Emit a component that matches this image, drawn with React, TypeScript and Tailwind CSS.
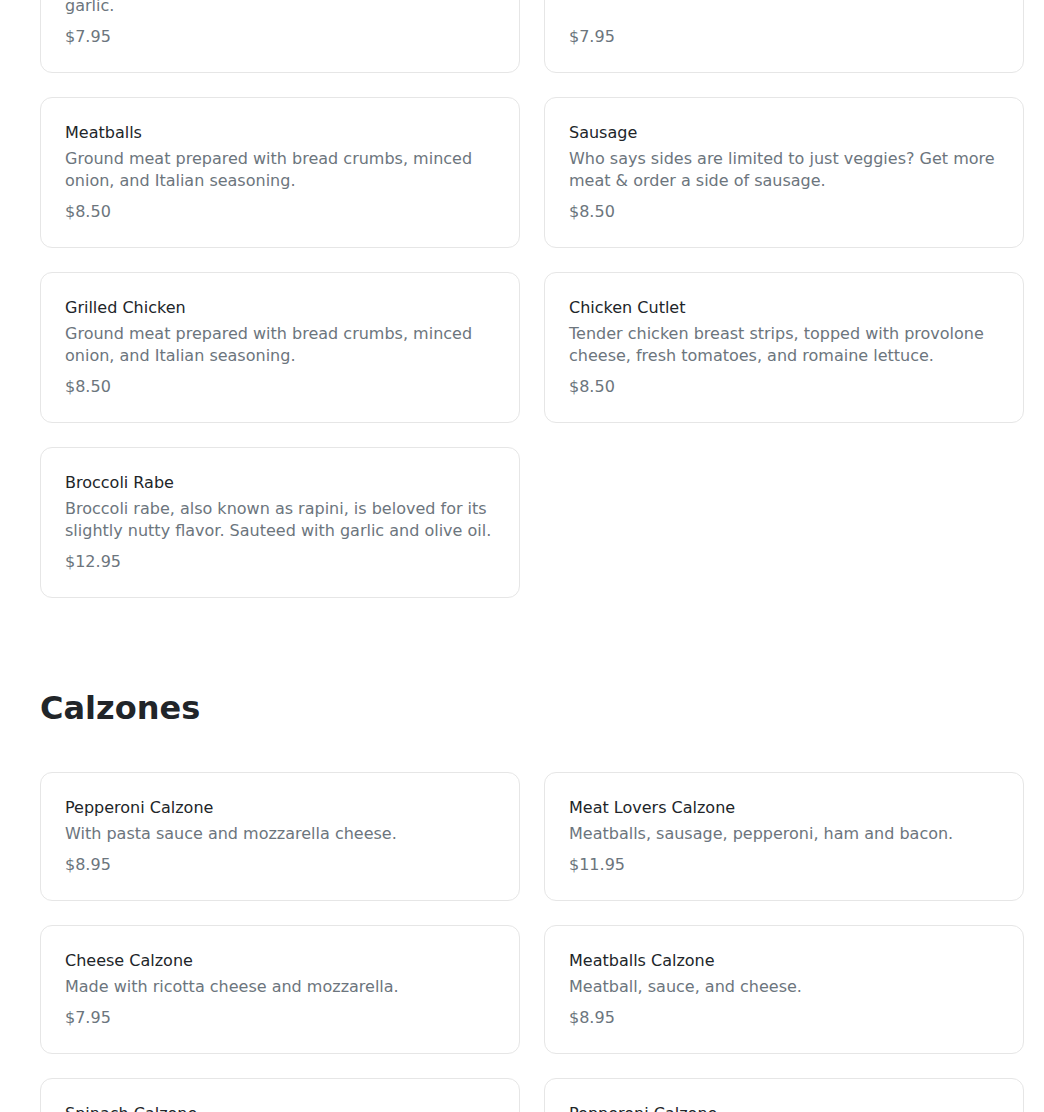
type Item = { name: string; desc: string; price: string };

const sides: Item[] = [
  {
    name: 'Sauteed Spinach',
    desc: 'Fresh spinach leaves sauteed in extra virgin olive oil with sea salt, black pepper, chili flakes and roasted garlic.',
    price: '$7.95',
  },
  {
    name: 'French Fries',
    desc: 'Crispy golden fries, seasoned with sea salt and served hot with ketchup.',
    price: '$7.95',
  },
  {
    name: 'Meatballs',
    desc: 'Ground meat prepared with bread crumbs, minced onion, and Italian seasoning.',
    price: '$8.50',
  },
  {
    name: 'Sausage',
    desc: 'Who says sides are limited to just veggies? Get more meat & order a side of sausage.',
    price: '$8.50',
  },
  {
    name: 'Grilled Chicken',
    desc: 'Ground meat prepared with bread crumbs, minced onion, and Italian seasoning.',
    price: '$8.50',
  },
  {
    name: 'Chicken Cutlet',
    desc: 'Tender chicken breast strips, topped with provolone cheese, fresh tomatoes, and romaine lettuce.',
    price: '$8.50',
  },
  {
    name: 'Broccoli Rabe',
    desc: 'Broccoli rabe, also known as rapini, is beloved for its slightly nutty flavor. Sauteed with garlic and olive oil.',
    price: '$12.95',
  },
];

const calzones: Item[] = [
  { name: 'Pepperoni Calzone', desc: 'With pasta sauce and mozzarella cheese.', price: '$8.95' },
  { name: 'Meat Lovers Calzone', desc: 'Meatballs, sausage, pepperoni, ham and bacon.', price: '$11.95' },
  { name: 'Cheese Calzone', desc: 'Made with ricotta cheese and mozzarella.', price: '$7.95' },
  { name: 'Meatballs Calzone', desc: 'Meatball, sauce, and cheese.', price: '$8.95' },
  { name: 'Spinach Calzone', desc: 'Fresh spinach, ricotta and mozzarella cheese.', price: '$8.95' },
  { name: 'Pepperoni Calzone', desc: 'With pasta sauce and mozzarella cheese.', price: '$8.95' },
];

function MenuCard({ item }: { item: Item }) {
  return (
    <div className="flex flex-col rounded-xl border border-[#e6e6e6] bg-white p-6 pb-[23px]">
      <h3 className="text-base leading-[22px] text-[#212529]">{item.name}</h3>
      <p className="mt-1 text-base leading-[22px] text-[#6c757d]">{item.desc}</p>
      <p className="mt-auto pt-2 text-base leading-6 text-[#6c757d]">{item.price}</p>
    </div>
  );
}

export default function App() {
  return (
    <div className="min-h-screen overflow-hidden bg-white font-['DejaVu_Sans',sans-serif]">
      <div className="ml-10 w-[984px] -mt-[100px]">
        <div className="grid grid-cols-2 gap-6">
          {sides.map((item, i) => (
            <MenuCard key={i} item={item} />
          ))}
        </div>

        <h2 className="mt-[91px] mb-[45px] text-[32px] font-bold leading-[1.2] text-[#212529]">
          Calzones
        </h2>
        <div className="grid grid-cols-2 gap-6 pb-12">
          {calzones.map((item, i) => (
            <MenuCard key={i} item={item} />
          ))}
        </div>
      </div>
    </div>
  );
}
